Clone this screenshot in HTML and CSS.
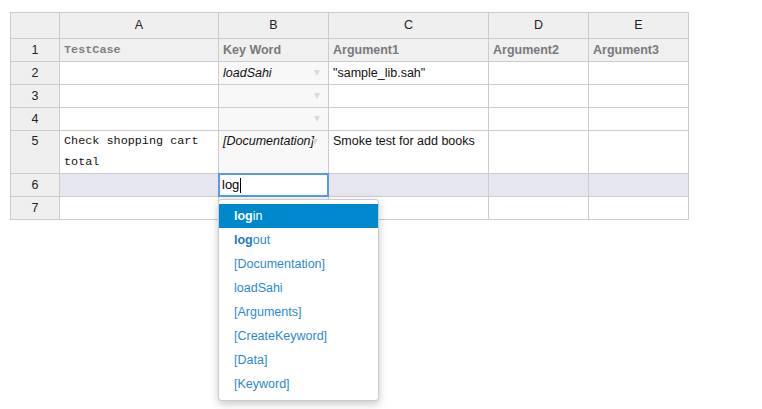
FILE: index.html
```html
<!DOCTYPE html>
<html>
<head>
<meta charset="utf-8">
<link rel="stylesheet" href="styles.css">
</head>
<body>
<div class="page">
  <div class="wrap">
    <div class="sheet">
      <div class="c corner"></div>
      <div class="c colh">A</div>
      <div class="c colh">B</div>
      <div class="c colh">C</div>
      <div class="c colh">D</div>
      <div class="c colh">E</div>

      <div class="c rowh">1</div>
      <div class="c hd mono">TestCase</div>
      <div class="c hd">Key Word</div>
      <div class="c hd">Argument1</div>
      <div class="c hd">Argument2</div>
      <div class="c hd">Argument3</div>

      <div class="c rowh">2</div>
      <div class="c"></div>
      <div class="c kw"><span class="it">loadSahi</span><span class="arrow"></span></div>
      <div class="c">"sample_lib.sah"</div>
      <div class="c"></div>
      <div class="c"></div>

      <div class="c rowh">3</div>
      <div class="c"></div>
      <div class="c kw"><span class="arrow"></span></div>
      <div class="c"></div>
      <div class="c"></div>
      <div class="c"></div>

      <div class="c rowh">4</div>
      <div class="c"></div>
      <div class="c kw"><span class="arrow"></span></div>
      <div class="c"></div>
      <div class="c"></div>
      <div class="c"></div>

      <div class="c rowh tall">5</div>
      <div class="c tall mono">Check shopping cart total</div>
      <div class="c kw tall"><span class="it">[Documentation]</span><span class="arrow"></span></div>
      <div class="c tall">Smoke test for add books</div>
      <div class="c"></div>
      <div class="c"></div>

      <div class="c rowh">6</div>
      <div class="c sel"></div>
      <div class="c sel"></div>
      <div class="c sel"></div>
      <div class="c sel"></div>
      <div class="c sel"></div>

      <div class="c rowh">7</div>
      <div class="c"></div>
      <div class="c kw"></div>
      <div class="c"></div>
      <div class="c"></div>
      <div class="c"></div>
    </div>

    <div class="editor">log<span class="caret"></span></div>

    <ul class="menu">
      <li class="item active"><b>log</b>in</li>
      <li class="item"><b>log</b>out</li>
      <li class="item">[Documentation]</li>
      <li class="item">loadSahi</li>
      <li class="item">[Arguments]</li>
      <li class="item">[CreateKeyword]</li>
      <li class="item">[Data]</li>
      <li class="item">[Keyword]</li>
    </ul>
  </div>
</div>
</body>
</html>
```

FILE: styles.css
```css
* { box-sizing: border-box; }
html, body { margin: 0; padding: 0; background: #fff; }
body {
  font-family: "Liberation Sans", Arial, sans-serif;
  font-size: 12.5px;
  color: #111;
}
.page { padding: 12px 10px; min-height: 409px; }
.wrap { position: relative; width: 679px; height: 388px; }
.sheet {
  display: grid;
  grid-template-columns: 49px 159px 110px 160px 100px 100px;
  grid-template-rows: 26px 23px 23px 23px 23px 43px 23px 23px;
  border-left: 1px solid #ccc;
  border-top: 1px solid #ccc;
  width: 679px;
}
.c {
  border-right: 1px solid #ccc;
  border-bottom: 1px solid #ccc;
  padding: 0 4px;
  line-height: 22px;
  white-space: nowrap;
  overflow: hidden;
  background: #fff;
}
.corner, .colh, .rowh { background: #efefef; color: #222; text-align: center; font-size: 12.5px; }
.colh { line-height: 25px; }
.hd { background: #f0f0f0; color: #7a7a7a; font-weight: bold; }
.mono { font-family: "Liberation Mono", "Courier New", monospace; font-size: 11.8px; }
.hd.mono { font-weight: bold; color: #808080; }
.tall { white-space: normal; line-height: 21px; }
.kw { background: #f8f8f8; display: flex; align-items: flex-start; padding-right: 8px; }
.kw .arrow { margin-left: auto; margin-top: 8px; width: 0; height: 0; border-left: 3.5px solid transparent; border-right: 3.5px solid transparent; border-top: 6px solid #dadada; flex: none; }
.kw.tall .arrow { margin-top: 8px; margin-left: -2px; }
.it { font-style: italic; }
.sel { background: #e6e6ee; }

.editor {
  position: absolute;
  left: 208px;
  top: 161px;
  width: 111px;
  height: 24px;
  border: 2px solid #5a96f5;
  background: #fff;
  padding: 0 2px;
  line-height: 20px;
  font-size: 13px;
  color: #000;
  display: flex;
  align-items: center;
}
.caret { display: inline-block; width: 1px; height: 15px; background: #000; margin-left: 1px; }

.menu {
  position: absolute;
  left: 208px;
  top: 187px;
  width: 161px;
  margin: 0;
  padding: 4px 0;
  list-style: none;
  background: #fff;
  border: 1px solid rgba(0,0,0,0.2);
  border-radius: 4px;
  box-shadow: 0 3px 8px rgba(0,0,0,0.22);
}
.item {
  height: 24px;
  line-height: 24px;
  padding-left: 15px;
  color: #2a8ad4;
  font-size: 12.5px;
}
.item b { color: #1c79c0; }
.item.active { background: #0088cc; color: #fff; }
.item.active b { color: #fff; }
```
